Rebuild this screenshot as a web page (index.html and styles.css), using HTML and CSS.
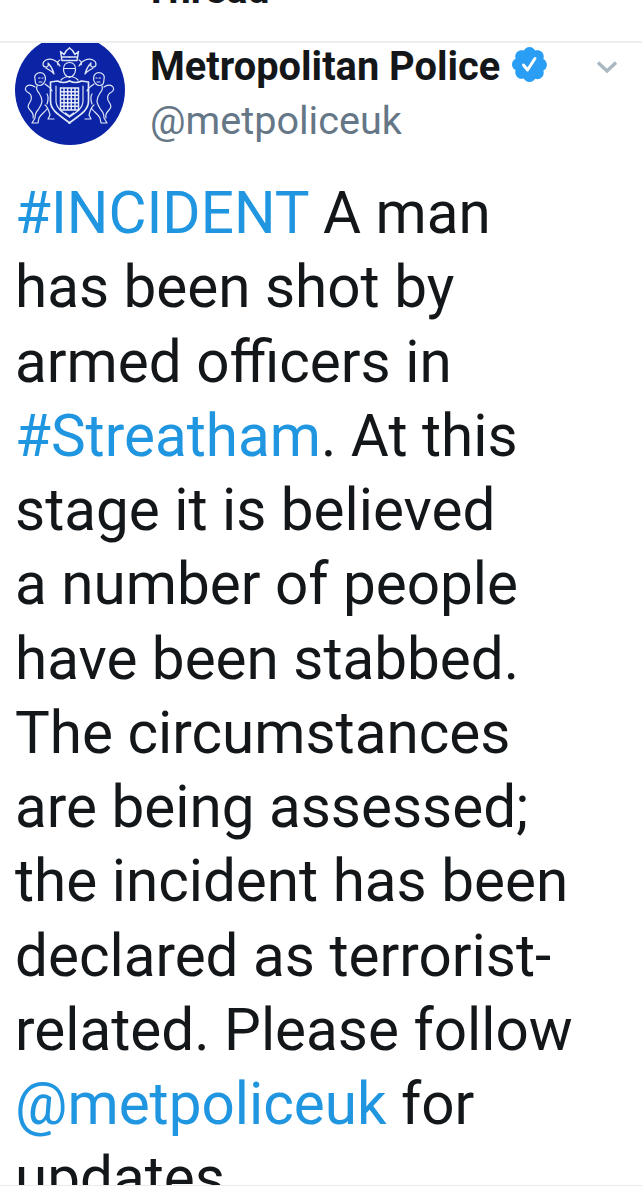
FILE: index.html
```html
<!DOCTYPE html>
<html lang="en">
<head>
<meta charset="utf-8">
<title>Thread</title>
<link rel="stylesheet" href="styles.css">
</head>
<body>
<header class="top">
  <div class="top-title">Thread</div>
</header>
<main class="tweet">
  <div class="head">
    <svg class="avatar" viewBox="0 0 110 110">
      <defs>
        <g id="crest-half" fill="none" stroke="#dfe6f6" stroke-width="1.200" stroke-linecap="round" stroke-linejoin="round">
          <path d="M47 25.500l-1.500-9 3.500 3 2.500-4 3-2.500M47 22h7.500M47 25.500h7.500" stroke-width="1.500"/>
          <path d="M54.500 27.500c-4 0-6 3-6 7 0 4 3 7 6 8M48.500 33.500h6M46 45c2-2 5-3.500 8.500-3.500"/>
          <path d="M45 31c-3-6-9-8-14-6-4 2-4 7 0 7 2 0 3-2 2-3M33 28c3 3 5 7 6 11M31 33c3 2 6 3 8 6M45 25c-2 1-3 3-2 5"/>
          <path d="M20 44c-1-3 1-5 3-6 3-1 6 0 7 3 1 3 0 6-2 8-2 2-5 2-7 0-1-2-1-3-1-5zM23.500 43h1.500M27 43h1M24 47h3"/>
          <path d="M20 52c-3-2-7-3-9 0-2 3 1 5 3 6 3 2 3 6 1 9-2 3-3 5 0 8 2 2 4 5 3 8"/>
          <path d="M30 49c3 2 6 4 7 7M22 51c-1 3 0 5 2 7 2 3 3 5 3 8 0 3-2 6-4 9-2 2-3 5-3 8l-3 5h6l1-5c2-4 6-6 8-9M32 59c2 3 1 7 0 10M30 70c3 2 4 6 5 10l-2 4h6"/>
          <path d="M54.500 46c-4 2-8 2-12 0l-7 1v19c0 10 10 15 19.500 22" stroke-width="1.700"/>
          <path d="M41 51v15c0 7 6 11 13.500 16M50.500 78l4 3"/>
        </g>
      </defs>
      <circle cx="55" cy="55" r="55" fill="#0b24a6"/>
      <use href="#crest-half"/>
      <use href="#crest-half" transform="translate(109 0) scale(-1 1)"/>
      <path fill="none" stroke="#e4eaf8" stroke-width="1.500" d="M45.500 53h18v22h-18zM49 53v22M52.700 53v22M56.300 53v22M60 53v22M45.500 56.700h18M45.500 60.300h18M45.500 64h18M45.500 67.700h18M45.500 71.300h18"/>
    </svg>
    <div class="names">
      <div class="name-row">
        <span class="name">Metropolitan Police</span>
        <svg class="badge" viewBox="-1.500 0 35 35">
          <path fill="#2a9df4" d="M16 0c2.500 0 4.600 1.500 5.700 3.600 2.300-.8 4.900-.3 6.700 1.500 1.800 1.800 2.300 4.500 1.500 6.800 2.100 1.100 3.500 3.300 3.500 5.800s-1.400 4.700-3.500 5.800c.8 2.300.3 5-1.500 6.800-1.800 1.800-4.400 2.300-6.700 1.500C20.600 33.500 18.500 35 16 35s-4.600-1.500-5.700-3.600c-2.300.8-4.900.3-6.700-1.500-1.800-1.800-2.300-4.500-1.500-6.800C0 22-1.500 19.900-1.500 17.400S0 12.900 2.100 11.800C1.300 9.600 1.800 6.900 3.600 5.100c1.800-1.800 4.400-2.300 6.700-1.500C11.400 1.500 13.500 0 16 0z"/>
          <path fill="none" stroke="#fff" stroke-width="3" stroke-linecap="round" stroke-linejoin="round" d="M10 18l4 5 7.500-11.500"/>
        </svg>
      </div>
      <div class="handle">@metpoliceuk</div>
    </div>
    <svg class="chevron" viewBox="0 0 20 12">
      <path fill="none" stroke="#aab8c2" stroke-width="3.400" d="M1 1.500l9 8.500 9-8.500"/>
    </svg>
  </div>
  <p class="text"><span class="link">#INCIDENT</span> A man<br>has been shot by<br>armed officers in<br><span class="link">#Streatham</span>. At this<br>stage it is believed<br>a number of people<br>have been stabbed.<br>The circumstances<br>are being assessed;<br>the incident has been<br>declared as terrorist-<br>related. Please follow<br><span class="link">@metpoliceuk</span> for<br>updates</p>
</main>
<footer class="bottom"></footer>
</body>
</html>
```
FILE: styles.css
```css
* { box-sizing: border-box; }
html, body { margin: 0; padding: 0; background: #fff; }
body {
  height: 1200px;
  overflow: hidden;
  font-family: Roboto, "Liberation Sans", sans-serif;
  color: #14171a;
  display: flex;
  flex-direction: column;
}
.top {
  height: 43px;
  flex: none;
  border-bottom: 2px solid #eceeef;
  overflow: hidden;
  display: flex;
  align-items: flex-end;
  padding: 0 0 31px 144px;
}
.top-title {
  font-size: 39.600px;
  font-weight: 700;
  line-height: 40px;
  flex: none;
}
.tweet {
  flex: 1;
  min-height: 0;
  overflow: hidden;
  padding-left: 15px;
}
.head {
  display: flex;
  align-items: flex-start;
  height: 133px;
}
.avatar {
  width: 110px;
  height: 110px;
  margin-top: -8px;
  flex: none;
}
.names {
  margin-left: 25px;
  flex: none;
  width: 447px;
}
.name-row {
  display: flex;
  align-items: center;
  gap: 12px;
  height: 48px;
}
.name {
  font-size: 39.800px;
  font-weight: 700;
  line-height: 48px;
}
.badge {
  width: 35px;
  height: 35px;
  flex: none;
  margin-bottom: 5px;
}
.handle {
  font-size: 39.600px;
  line-height: 48px;
  margin-top: 6px;
  color: #657786;
}
.chevron {
  width: 20px;
  height: 12px;
  margin-top: 18px;
  flex: none;
}
.text {
  margin: 0;
  font-size: 58.400px;
  line-height: 74.250px;
  white-space: nowrap;
  color: #14171a;
}
.link { color: #2196e0; }
.bottom {
  height: 15px;
  flex: none;
  border-top: 1px solid #e8eaec;
  background: #fff;
}
```
